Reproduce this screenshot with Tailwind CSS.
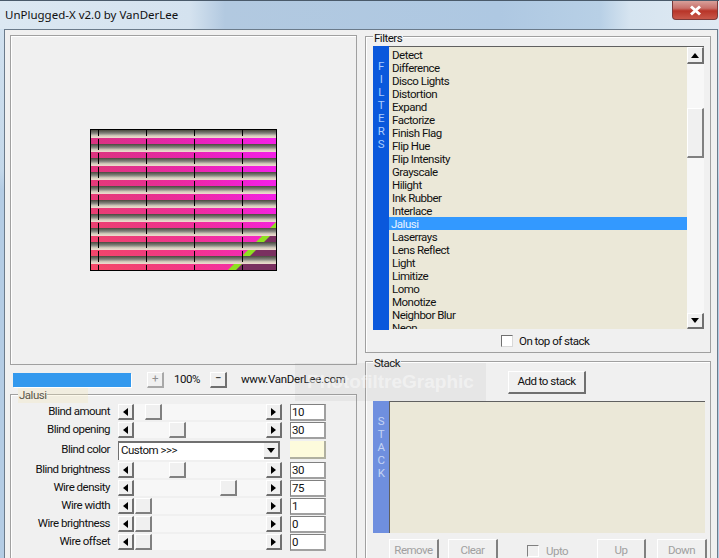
<!DOCTYPE html>
<html lang="en">
  <head>
    <meta charset="UTF-8" />
    <title>UnPlugged-X v2.0 by VanDerLee</title>
    <script src="https://cdn.jsdelivr.net/npm/@tailwindcss/browser@4"></script>
  </head>
  <body class="m-0 overflow-hidden">
    <div class="relative w-[719px] h-[558px] overflow-hidden flex flex-col bg-[linear-gradient(180deg,#d4e3f0_0px,#c4d8ea_170px,#b4cce4_190px,#b4cce4_558px)] font-['Roboto',sans-serif] text-[11.5px] tracking-[-0.5px] text-[#111111]">
      <!-- title bar -->
      <div class="relative h-[29px] shrink-0 flex items-center pl-[5px] border-t border-[#4a5a6a] bg-[linear-gradient(90deg,#dce8f2_0px,#d4e2ef_190px,#b2c9e0_225px,#aec8e2_500px,#b8d0e6_600px,#d6e4f0_630px,#e0eaf3_719px)]">
        <span class="font-['Noto_Sans',sans-serif] text-[11.5px] tracking-normal text-[#101010]">UnPlugged-X v2.0 by VanDerLee</span>
        <div class="absolute right-[1px] top-0 w-[46px] h-[19px] rounded-b-[4px] border border-t-0 border-[#7a3a3a] bg-[linear-gradient(180deg,#d8a09a_0%,#c8706a_40%,#b83428_55%,#c8584a_100%)] flex items-center justify-center">
          <svg width="13" height="11" viewBox="0 0 13 11"><path d="M2 1.5 L11 9.5 M11 1.5 L2 9.5" stroke="#ffffff" stroke-width="3"/></svg>
        </div>
      </div>

      <!-- dialog body -->
      <div class="ml-[4px] mr-[1px] flex-1 min-h-0 border border-b-0 border-[#6b7b8b] bg-[#f0f0f0] pl-[5px] pt-[5px] flex gap-[8px]">
        <!-- left column -->
        <div class="w-[347px] shrink-0 flex flex-col">
          <div class="h-[330px] shrink-0 border border-[#a0a0a0] shadow-[inset_1px_1px_0_#ffffff] flex items-center justify-center">
            <svg width="187" height="142" viewBox="0 0 187 142" class="block">
              <defs>
                <linearGradient id="mag" x1="0" x2="1" y1="0" y2="0">
                  <stop offset="0" stop-color="#c82a90" />
                  <stop offset="0.55" stop-color="#e822b8" />
                  <stop offset="1" stop-color="#f420e8" />
                </linearGradient>
                <linearGradient id="warm" x1="1" x2="0" y1="0" y2="1">
                  <stop offset="0.25" stop-color="#ff4060" stop-opacity="0" />
                  <stop offset="1" stop-color="#ff5060" stop-opacity="0.85" />
                </linearGradient>
                <linearGradient id="blind" x1="0" x2="0" y1="0" y2="1">
                  <stop offset="0" stop-color="#4a4a3e" />
                  <stop offset="0.4" stop-color="#80807a" />
                  <stop offset="0.72" stop-color="#d4ccbc" />
                  <stop offset="1" stop-color="#f0dcd0" />
                </linearGradient>
                <pattern id="slats" patternUnits="userSpaceOnUse" x="0" y="1" width="187" height="14">
                  <rect x="0" y="0" width="187" height="8" fill="url(#blind)" />
                </pattern>
              </defs>
              <rect width="187" height="142" fill="url(#mag)" />
              <rect width="187" height="142" fill="url(#warm)" />
              <polygon points="187,96 187,142 141,142" fill="#7a3060" />
              <polygon points="187,92 187,100 145,142 137,142" fill="#8ee020" />
              <rect width="187" height="142" fill="url(#slats)" />
              <g stroke="#000000" stroke-width="1" stroke-dasharray="11 3">
                <line x1="8.5" y1="-4" x2="8.5" y2="141" />
                <line x1="56.5" y1="-4" x2="56.5" y2="141" />
                <line x1="104.5" y1="-4" x2="104.5" y2="141" />
                <line x1="152.5" y1="-4" x2="152.5" y2="141" />
              </g>
              <rect x="0.5" y="0.5" width="186" height="141" fill="none" stroke="#000000" />
            </svg>
          </div>

          <!-- zoom row -->
          <div class="h-[29px] shrink-0 flex items-center pl-[3px]">
            <div class="w-[118px] h-[14px] bg-[#3399ee] shadow-[1px_1px_0_#ffffff]"></div>
            <div class="ml-[16px] w-[17px] h-[16px] border-t border-l border-white border-r-2 border-b-2 border-r-[#a8a8a8] border-b-[#a8a8a8] text-[#909090] flex items-center justify-center leading-none">+</div>
            <div class="w-[46px] text-center">100%</div>
            <div class="w-[17px] h-[16px] border-t border-l border-white border-r-2 border-b-2 border-r-[#707070] border-b-[#707070] flex items-center justify-center leading-none">&minus;</div>
            <div class="ml-[14px] tracking-[-0.3px]">www.VanDerLee.com</div>
          </div>

          <!-- Jalusi group -->
          <div class="relative flex-1 border border-b-0 border-[#a0a0a0] shadow-[inset_1px_1px_0_#ffffff] pt-[9px]">
            <span class="absolute -top-[7px] left-[7px] px-[1px] bg-[#f0f0f0] leading-[14px]">Jalusi</span>

            <div class="h-[16px] flex items-center">
              <div class="w-[99px] text-right leading-none">Blind amount</div>
              <div class="ml-[8px] w-[164px] h-[16px] flex bg-[#f7f7f7]">
                <div class="w-[16px] h-[16px] bg-[#f0f0f0] border-t border-l border-white border-r-2 border-b-2 border-r-[#707070] border-b-[#707070] flex items-center justify-center"><svg width="5" height="8" viewBox="0 0 5 8"><path d="M5 0V8L0 4Z" /></svg></div>
                <div class="flex-1"><div class="ml-[11px] w-[17px] h-[16px] bg-[#f0f0f0] border-t border-l border-white border-r-2 border-b-2 border-r-[#808080] border-b-[#808080]"></div></div>
                <div class="w-[16px] h-[16px] bg-[#f0f0f0] border-t border-l border-white border-r-2 border-b-2 border-r-[#707070] border-b-[#707070] flex items-center justify-center"><svg width="5" height="8" viewBox="0 0 5 8"><path d="M0 0V8L5 4Z" /></svg></div>
              </div>
              <div class="ml-[8px] w-[36px] h-[17px] bg-white border-t border-l border-[#808080] border-r-2 border-b-2 border-r-[#a0a0a0] border-b-[#a0a0a0] pl-[1px] leading-[14px]">10</div>
            </div>

            <div class="mt-[2px] h-[16px] flex items-center">
              <div class="w-[99px] text-right leading-none">Blind opening</div>
              <div class="ml-[8px] w-[164px] h-[16px] flex bg-[#f7f7f7]">
                <div class="w-[16px] h-[16px] bg-[#f0f0f0] border-t border-l border-white border-r-2 border-b-2 border-r-[#707070] border-b-[#707070] flex items-center justify-center"><svg width="5" height="8" viewBox="0 0 5 8"><path d="M5 0V8L0 4Z" /></svg></div>
                <div class="flex-1"><div class="ml-[35px] w-[17px] h-[16px] bg-[#f0f0f0] border-t border-l border-white border-r-2 border-b-2 border-r-[#808080] border-b-[#808080]"></div></div>
                <div class="w-[16px] h-[16px] bg-[#f0f0f0] border-t border-l border-white border-r-2 border-b-2 border-r-[#707070] border-b-[#707070] flex items-center justify-center"><svg width="5" height="8" viewBox="0 0 5 8"><path d="M0 0V8L5 4Z" /></svg></div>
              </div>
              <div class="ml-[8px] w-[36px] h-[17px] bg-white border-t border-l border-[#808080] border-r-2 border-b-2 border-r-[#a0a0a0] border-b-[#a0a0a0] pl-[1px] leading-[14px]">30</div>
            </div>

            <div class="mt-[3px] h-[18px] flex items-center">
              <div class="w-[99px] text-right leading-none">Blind color</div>
              <div class="ml-[8px] w-[162px] h-[19px] bg-white border-t-2 border-l border-[#707070] border-r-white border-b-white pl-[2px] flex items-center justify-between leading-none">
                <span>Custom &gt;&gt;&gt;</span>
                <div class="w-[16px] h-[16px] bg-[#f0f0f0] border-r-2 border-b-2 border-r-[#707070] border-b-[#707070] flex items-center justify-center"><svg width="8" height="5" viewBox="0 0 8 5"><path d="M0 0H8L4 5Z" /></svg></div>
              </div>
              <div class="ml-[10px] w-[36px] h-[18px] bg-[#fdfbdc] border-r-2 border-b-2 border-r-[#b0b0a0] border-b-[#b0b0a0]"></div>
            </div>

            <div class="mt-[3px] h-[16px] flex items-center">
              <div class="w-[99px] text-right leading-none">Blind brightness</div>
              <div class="ml-[8px] w-[164px] h-[16px] flex bg-[#f7f7f7]">
                <div class="w-[16px] h-[16px] bg-[#f0f0f0] border-t border-l border-white border-r-2 border-b-2 border-r-[#707070] border-b-[#707070] flex items-center justify-center"><svg width="5" height="8" viewBox="0 0 5 8"><path d="M5 0V8L0 4Z" /></svg></div>
                <div class="flex-1"><div class="ml-[35px] w-[17px] h-[16px] bg-[#f0f0f0] border-t border-l border-white border-r-2 border-b-2 border-r-[#808080] border-b-[#808080]"></div></div>
                <div class="w-[16px] h-[16px] bg-[#f0f0f0] border-t border-l border-white border-r-2 border-b-2 border-r-[#707070] border-b-[#707070] flex items-center justify-center"><svg width="5" height="8" viewBox="0 0 5 8"><path d="M0 0V8L5 4Z" /></svg></div>
              </div>
              <div class="ml-[8px] w-[36px] h-[17px] bg-white border-t border-l border-[#808080] border-r-2 border-b-2 border-r-[#a0a0a0] border-b-[#a0a0a0] pl-[1px] leading-[14px]">30</div>
            </div>

            <div class="mt-[2px] h-[16px] flex items-center">
              <div class="w-[99px] text-right leading-none">Wire density</div>
              <div class="ml-[8px] w-[164px] h-[16px] flex bg-[#f7f7f7]">
                <div class="w-[16px] h-[16px] bg-[#f0f0f0] border-t border-l border-white border-r-2 border-b-2 border-r-[#707070] border-b-[#707070] flex items-center justify-center"><svg width="5" height="8" viewBox="0 0 5 8"><path d="M5 0V8L0 4Z" /></svg></div>
                <div class="flex-1"><div class="ml-[86px] w-[17px] h-[16px] bg-[#f0f0f0] border-t border-l border-white border-r-2 border-b-2 border-r-[#808080] border-b-[#808080]"></div></div>
                <div class="w-[16px] h-[16px] bg-[#f0f0f0] border-t border-l border-white border-r-2 border-b-2 border-r-[#707070] border-b-[#707070] flex items-center justify-center"><svg width="5" height="8" viewBox="0 0 5 8"><path d="M0 0V8L5 4Z" /></svg></div>
              </div>
              <div class="ml-[8px] w-[36px] h-[17px] bg-white border-t border-l border-[#808080] border-r-2 border-b-2 border-r-[#a0a0a0] border-b-[#a0a0a0] pl-[1px] leading-[14px]">75</div>
            </div>

            <div class="mt-[2px] h-[16px] flex items-center">
              <div class="w-[99px] text-right leading-none">Wire width</div>
              <div class="ml-[8px] w-[164px] h-[16px] flex bg-[#f7f7f7]">
                <div class="w-[16px] h-[16px] bg-[#f0f0f0] border-t border-l border-white border-r-2 border-b-2 border-r-[#707070] border-b-[#707070] flex items-center justify-center"><svg width="5" height="8" viewBox="0 0 5 8"><path d="M5 0V8L0 4Z" /></svg></div>
                <div class="flex-1"><div class="ml-[1px] w-[17px] h-[16px] bg-[#f0f0f0] border-t border-l border-white border-r-2 border-b-2 border-r-[#808080] border-b-[#808080]"></div></div>
                <div class="w-[16px] h-[16px] bg-[#f0f0f0] border-t border-l border-white border-r-2 border-b-2 border-r-[#707070] border-b-[#707070] flex items-center justify-center"><svg width="5" height="8" viewBox="0 0 5 8"><path d="M0 0V8L5 4Z" /></svg></div>
              </div>
              <div class="ml-[8px] w-[36px] h-[17px] bg-white border-t border-l border-[#808080] border-r-2 border-b-2 border-r-[#a0a0a0] border-b-[#a0a0a0] pl-[1px] leading-[14px]">1</div>
            </div>

            <div class="mt-[2px] h-[16px] flex items-center">
              <div class="w-[99px] text-right leading-none">Wire brightness</div>
              <div class="ml-[8px] w-[164px] h-[16px] flex bg-[#f7f7f7]">
                <div class="w-[16px] h-[16px] bg-[#f0f0f0] border-t border-l border-white border-r-2 border-b-2 border-r-[#707070] border-b-[#707070] flex items-center justify-center"><svg width="5" height="8" viewBox="0 0 5 8"><path d="M5 0V8L0 4Z" /></svg></div>
                <div class="flex-1"><div class="ml-[1px] w-[17px] h-[16px] bg-[#f0f0f0] border-t border-l border-white border-r-2 border-b-2 border-r-[#808080] border-b-[#808080]"></div></div>
                <div class="w-[16px] h-[16px] bg-[#f0f0f0] border-t border-l border-white border-r-2 border-b-2 border-r-[#707070] border-b-[#707070] flex items-center justify-center"><svg width="5" height="8" viewBox="0 0 5 8"><path d="M0 0V8L5 4Z" /></svg></div>
              </div>
              <div class="ml-[8px] w-[36px] h-[17px] bg-white border-t border-l border-[#808080] border-r-2 border-b-2 border-r-[#a0a0a0] border-b-[#a0a0a0] pl-[1px] leading-[14px]">0</div>
            </div>

            <div class="mt-[2px] h-[16px] flex items-center">
              <div class="w-[99px] text-right leading-none">Wire offset</div>
              <div class="ml-[8px] w-[164px] h-[16px] flex bg-[#f7f7f7]">
                <div class="w-[16px] h-[16px] bg-[#f0f0f0] border-t border-l border-white border-r-2 border-b-2 border-r-[#707070] border-b-[#707070] flex items-center justify-center"><svg width="5" height="8" viewBox="0 0 5 8"><path d="M5 0V8L0 4Z" /></svg></div>
                <div class="flex-1"><div class="ml-[1px] w-[17px] h-[16px] bg-[#f0f0f0] border-t border-l border-white border-r-2 border-b-2 border-r-[#808080] border-b-[#808080]"></div></div>
                <div class="w-[16px] h-[16px] bg-[#f0f0f0] border-t border-l border-white border-r-2 border-b-2 border-r-[#707070] border-b-[#707070] flex items-center justify-center"><svg width="5" height="8" viewBox="0 0 5 8"><path d="M0 0V8L5 4Z" /></svg></div>
              </div>
              <div class="ml-[8px] w-[36px] h-[17px] bg-white border-t border-l border-[#808080] border-r-2 border-b-2 border-r-[#a0a0a0] border-b-[#a0a0a0] pl-[1px] leading-[14px]">0</div>
            </div>
          </div>
        </div>

        <!-- right column -->
        <div class="w-[346px] shrink-0 flex flex-col pt-[1px]">
          <!-- Filters group -->
          <div class="relative h-[317px] shrink-0 border border-[#a0a0a0] shadow-[inset_1px_1px_0_#ffffff] pl-[7px] pt-[9px]">
            <span class="absolute -top-[6px] left-[7px] px-[1px] bg-[#f0f0f0] leading-[14px]">Filters</span>
            <div class="flex h-[284px] w-[331px]">
              <div class="w-[16px] h-[284px] bg-[#0a58dc] text-[#a8ccff] text-center leading-[13px] pt-[14px]">
                <div>F</div><div>I</div><div>L</div><div>T</div><div>E</div><div>R</div><div>S</div>
              </div>
              <div class="flex-1 min-w-0 h-[283px] overflow-hidden bg-[#ebe8d8] border-t border-[#606060]">
                <div class="pt-[1px] leading-[15px] pr-[17px]">
                  <div class="h-[13px] pl-[3px]">Detect</div>
                  <div class="h-[13px] pl-[3px]">Difference</div>
                  <div class="h-[13px] pl-[3px]">Disco Lights</div>
                  <div class="h-[13px] pl-[3px]">Distortion</div>
                  <div class="h-[13px] pl-[3px]">Expand</div>
                  <div class="h-[13px] pl-[3px]">Factorize</div>
                  <div class="h-[13px] pl-[3px]">Finish Flag</div>
                  <div class="h-[13px] pl-[3px]">Flip Hue</div>
                  <div class="h-[13px] pl-[3px]">Flip Intensity</div>
                  <div class="h-[13px] pl-[3px]">Grayscale</div>
                  <div class="h-[13px] pl-[3px]">Hilight</div>
                  <div class="h-[13px] pl-[3px]">Ink Rubber</div>
                  <div class="h-[13px] pl-[3px]">Interlace</div>
                  <div class="h-[13px] pl-[2px] bg-[#3399ff] text-[#e8f2ff]">Jalusi</div>
                  <div class="h-[13px] pl-[3px]">Laserrays</div>
                  <div class="h-[13px] pl-[3px]">Lens Reflect</div>
                  <div class="h-[13px] pl-[3px]">Light</div>
                  <div class="h-[13px] pl-[3px]">Limitize</div>
                  <div class="h-[13px] pl-[3px]">Lomo</div>
                  <div class="h-[13px] pl-[3px]">Monotize</div>
                  <div class="h-[13px] pl-[3px]">Neighbor Blur</div>
                  <div class="h-[13px] pl-[3px]">Neon</div>
                </div>
              </div>
              <div class="-ml-[17px] relative w-[17px] h-[282px] mt-[1px] bg-[#f7f7f7] flex flex-col">
                <div class="w-[17px] h-[17px] bg-[#f0f0f0] border-t border-l border-white border-r-2 border-b-2 border-r-[#707070] border-b-[#707070] flex items-center justify-center"><svg width="8" height="5" viewBox="0 0 8 5"><path d="M4 0L8 5H0Z" /></svg></div>
                <div class="mt-[44px] w-[17px] h-[50px] bg-[#f0f0f0] border-t border-l border-white border-r-2 border-b-2 border-r-[#808080] border-b-[#808080]"></div>
                <div class="mt-auto w-[17px] h-[16px] bg-[#f0f0f0] border-t border-l border-white border-r-2 border-b-2 border-r-[#707070] border-b-[#707070] flex items-center justify-center"><svg width="8" height="5" viewBox="0 0 8 5"><path d="M0 0H8L4 5Z" /></svg></div>
              </div>
            </div>
            <div class="mt-[4px] pl-[128px] flex items-center">
              <div class="w-[12px] h-[12px] bg-white border-t border-l border-[#707070] border-r border-b border-r-[#d8d8d8] border-b-[#d8d8d8]"></div>
              <span class="ml-[6px] leading-[14px]">On top of stack</span>
            </div>
          </div>

          <!-- Stack group -->
          <div class="relative flex-1 mt-[8px] border border-b-0 border-[#a0a0a0] shadow-[inset_1px_1px_0_#ffffff] pl-[7px] pt-[9px]">
            <span class="absolute -top-[6px] left-[7px] px-[1px] bg-[#f0f0f0] leading-[14px]">Stack</span>
            <div class="ml-[135px] w-[78px] h-[23px] border-t border-l border-white border-r-2 border-b-2 border-r-[#707070] border-b-[#707070] flex items-center justify-center leading-none">Add to stack</div>
            <div class="mt-[7px] flex h-[132px] w-[332px]">
              <div class="w-[16px] bg-[#6f8fdf] text-[#c4d4f4] text-center leading-[13px] pt-[14px]">
                <div>S</div><div>T</div><div>A</div><div>C</div><div>K</div>
              </div>
              <div class="flex-1 bg-[#ebe8d8] border-t border-l border-[#606060]"></div>
            </div>
            <div class="mt-[6px] pl-[16px] flex items-start text-[#a0a0a0]">
              <div class="w-[50px] h-[24px] border-t border-l border-white border-r-2 border-r-[#808080] pt-[3px] text-center leading-[14px]">Remove</div>
              <div class="ml-[9px] w-[50px] h-[24px] border-t border-l border-white border-r-2 border-r-[#808080] pt-[3px] text-center leading-[14px]">Clear</div>
              <div class="ml-[29px] mt-[6px] w-[12px] h-[12px] border-t border-l border-[#808080] border-r border-b border-r-white border-b-white"></div>
              <span class="ml-[7px] mt-[5px] w-[23px] leading-[14px]">Upto</span>
              <div class="ml-[28px] w-[49px] h-[24px] border-t border-l border-white border-r-2 border-r-[#808080] pt-[3px] text-center leading-[14px]">Up</div>
              <div class="ml-[11px] w-[50px] h-[24px] border-t border-l border-white border-r-2 border-r-[#808080] pt-[3px] text-center leading-[14px]">Down</div>
            </div>
          </div>
        </div>
      </div>

      <!-- site watermark pasted over the dialog -->
      <div class="absolute left-[18px] top-[388px] w-[70px] h-[15px] bg-[#f5e8b8]/30"></div>
      <div class="absolute left-[295px] top-[363px] w-[191px] h-[38px] bg-[#909090]/10 overflow-hidden flex items-center justify-center font-['Liberation_Sans',sans-serif] font-bold text-[19px] tracking-normal text-white/45 whitespace-nowrap">PhotofiltreGraphic</div>
    </div>
  </body>
</html>
